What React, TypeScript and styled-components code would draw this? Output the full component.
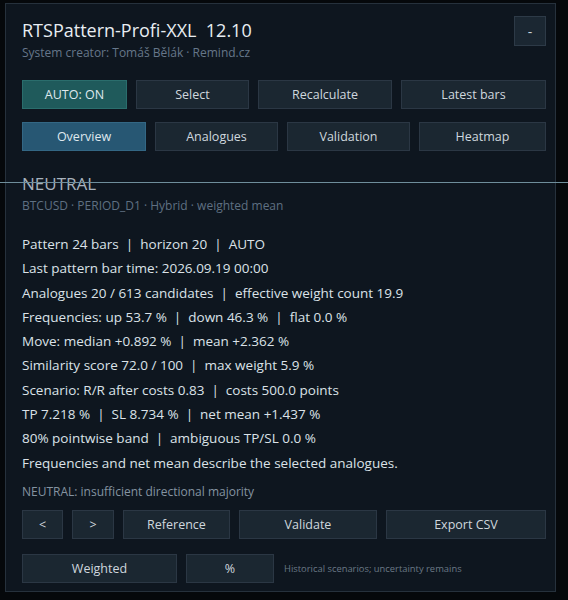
import React from 'react';
import styled, { createGlobalStyle } from 'styled-components';

const GlobalStyle = createGlobalStyle`
  html, body {
    margin: 0;
    padding: 0;
    background-color: #05080b;
    font-family: 'Open Sans', 'Noto Sans', sans-serif;
  }
`;

const Screen = styled.div`
  position: relative;
  width: 568px;
  height: 600px;
  padding: 3px 0 0 5px;
  box-sizing: border-box;
`;

const Panel = styled.div`
  width: 551px;
  height: 589px;
  box-sizing: border-box;
  background-color: #0e161f;
  border: 1px solid #26313c;
  padding: 11px 9px 0 16px;
  display: flex;
  flex-direction: column;
`;

const Header = styled.div`
  display: flex;
  justify-content: space-between;
  align-items: flex-start;
`;

const TitleBlock = styled.div`
  padding-top: 4px;
`;

const Title = styled.div`
  font-size: 18px;
  line-height: 22px;
  color: #e8edf2;
  white-space: pre;
`;

const Creator = styled.div`
  margin-top: 5px;
  font-size: 12px;
  line-height: 14px;
  color: #66778a;
`;

const MinButton = styled.div`
  width: 32px;
  height: 30px;
  margin-top: 1px;
  box-sizing: border-box;
  background-color: #1b2732;
  border: 1px solid #2d3a47;
  display: flex;
  align-items: center;
  justify-content: center;
  color: #c9d2da;
  font-size: 14px;
`;

const Row = styled.div<{ $top: number }>`
  display: flex;
  gap: 9px;
  margin-top: ${(p) => p.$top}px;
  align-items: center;
`;

const Button = styled.div<{ $w: number; $tone?: 'teal' | 'blue' }>`
  width: ${(p) => p.$w}px;
  height: 29px;
  box-sizing: border-box;
  display: flex;
  align-items: center;
  justify-content: center;
  font-size: 12.5px;
  color: ${(p) => (p.$tone ? '#dfe8ee' : '#cfd7de')};
  background-color: ${(p) =>
    p.$tone === 'teal' ? '#1f5a5b' : p.$tone === 'blue' ? '#275773' : '#1b2731'};
  border: 1px solid
    ${(p) => (p.$tone === 'teal' ? '#2a6d6c' : p.$tone === 'blue' ? '#336784' : '#2b3744')};
  flex-shrink: 0;
`;

const Signal = styled.div`
  margin-top: 23px;
  font-size: 17px;
  line-height: 20px;
  color: #a7b2bd;
`;

const Meta = styled.div`
  margin-top: 5px;
  font-size: 12px;
  line-height: 14px;
  color: #5f7082;
`;

const Stats = styled.div`
  margin-top: 19px;
  display: flex;
  flex-direction: column;
`;

const StatLine = styled.div`
  font-size: 13.5px;
  line-height: 24.3px;
  color: #dbe2e8;
  white-space: pre;
`;

const Verdict = styled.div`
  margin-top: 10px;
  font-size: 12px;
  line-height: 14px;
  color: #8493a1;
`;

const Note = styled.div`
  margin-left: 1px;
  font-size: 9.4px;
  color: #6a7885;
`;

const Crosshair = styled.div`
  position: absolute;
  left: 0;
  right: 0;
  top: 182px;
  height: 1px;
  background-color: #6f8e9b;
`;

const stats = [
  'Pattern 24 bars  |  horizon 20  |  AUTO',
  'Last pattern bar time: 2026.09.19 00:00',
  'Analogues 20 / 613 candidates  |  effective weight count 19.9',
  'Frequencies: up 53.7 %  |  down 46.3 %  |  flat 0.0 %',
  'Move: median +0.892 %  |  mean +2.362 %',
  'Similarity score 72.0 / 100  |  max weight 5.9 %',
  'Scenario: R/R after costs 0.83  |  costs 500.0 points',
  'TP 7.218 %  |  SL 8.734 %  |  net mean +1.437 %',
  '80% pointwise band  |  ambiguous TP/SL 0.0 %',
  'Frequencies and net mean describe the selected analogues.',
];

const App: React.FC = () => {
  return (
    <Screen>
      <GlobalStyle />
      <Panel>
        <Header>
          <TitleBlock>
            <Title>RTSPattern-Profi-XXL  12.10</Title>
            <Creator>System creator: Tomáš Bělák · Remind.cz</Creator>
          </TitleBlock>
          <MinButton>-</MinButton>
        </Header>

        <Row $top={20}>
          <Button $w={105} $tone="teal">AUTO: ON</Button>
          <Button $w={113}>Select</Button>
          <Button $w={134}>Recalculate</Button>
          <Button $w={145}>Latest bars</Button>
        </Row>
        <Row $top={13}>
          <Button $w={124} $tone="blue">Overview</Button>
          <Button $w={123}>Analogues</Button>
          <Button $w={123}>Validation</Button>
          <Button $w={127}>Heatmap</Button>
        </Row>

        <Signal>NEUTRAL</Signal>
        <Meta>BTCUSD · PERIOD_D1 · Hybrid · weighted mean</Meta>

        <Stats>
          {stats.map((line) => (
            <StatLine key={line}>{line}</StatLine>
          ))}
        </Stats>

        <Verdict>NEUTRAL: insufficient directional majority</Verdict>

        <Row $top={11}>
          <Button $w={41}>&lt;</Button>
          <Button $w={42}>&gt;</Button>
          <Button $w={107}>Reference</Button>
          <Button $w={138}>Validate</Button>
          <Button $w={160}>Export CSV</Button>
        </Row>
        <Row $top={15}>
          <Button $w={155}>Weighted</Button>
          <Button $w={88}>%</Button>
          <Note>Historical scenarios; uncertainty remains</Note>
        </Row>
      </Panel>
      <Crosshair />
    </Screen>
  );
};

export default App;
